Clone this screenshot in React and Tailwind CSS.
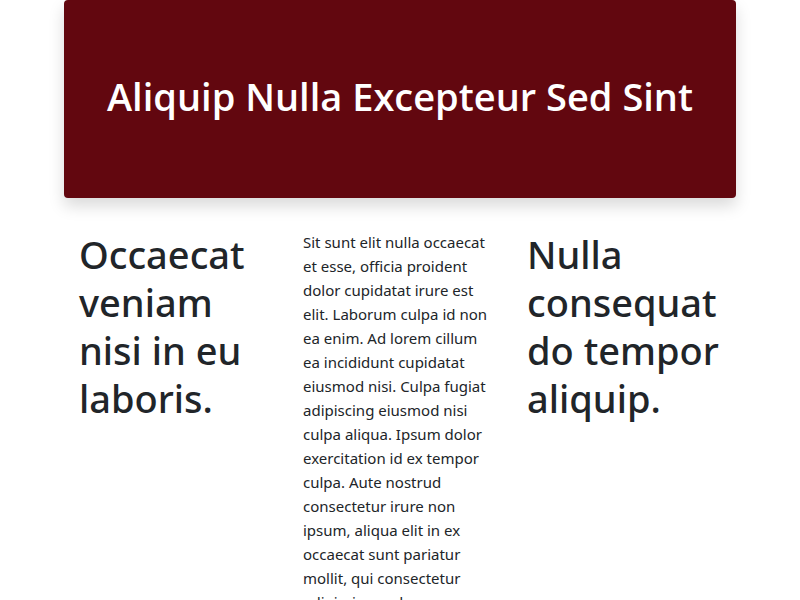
export default function App() {
  return (
    <div className="h-screen overflow-hidden bg-white px-16 font-['Noto_Sans',sans-serif] text-[#212529]">
      <header className="rounded bg-[#62070f] px-8 pt-[72px] pb-[78px] text-center shadow-[0_8px_16px_rgba(0,0,0,0.15)]">
        <h1 className="font-['Open_Sans','Noto_Sans',sans-serif] text-[38px] leading-[48px] font-semibold text-white">Aliquip Nulla Excepteur Sed Sint</h1>
      </header>
      <main className="grid grid-cols-3 pt-8">
        <section className="px-[15px]">
          <h2 className="text-[38px] leading-[48px] font-medium">Occaecat veniam nisi in eu laboris.</h2>
        </section>
        <section className="pr-5 pl-[15px]">
          <p className="text-[15px] leading-6">
            Sit sunt elit nulla occaecat et esse, officia proident dolor cupidatat irure est elit. Laborum culpa id non ea enim. Ad lorem cillum ea incididunt cupidatat eiusmod nisi. Culpa fugiat adipiscing eiusmod nisi culpa aliqua. Ipsum dolor exercitation id ex tempor culpa. Aute nostrud consectetur irure non ipsum, aliqua elit in ex occaecat sunt pariatur mollit, qui consectetur adipiscing sed
          </p>
        </section>
        <section className="px-[15px]">
          <h2 className="text-[38px] leading-[48px] font-medium">Nulla consequat do tempor aliquip.</h2>
        </section>
      </main>
    </div>
  );
}
